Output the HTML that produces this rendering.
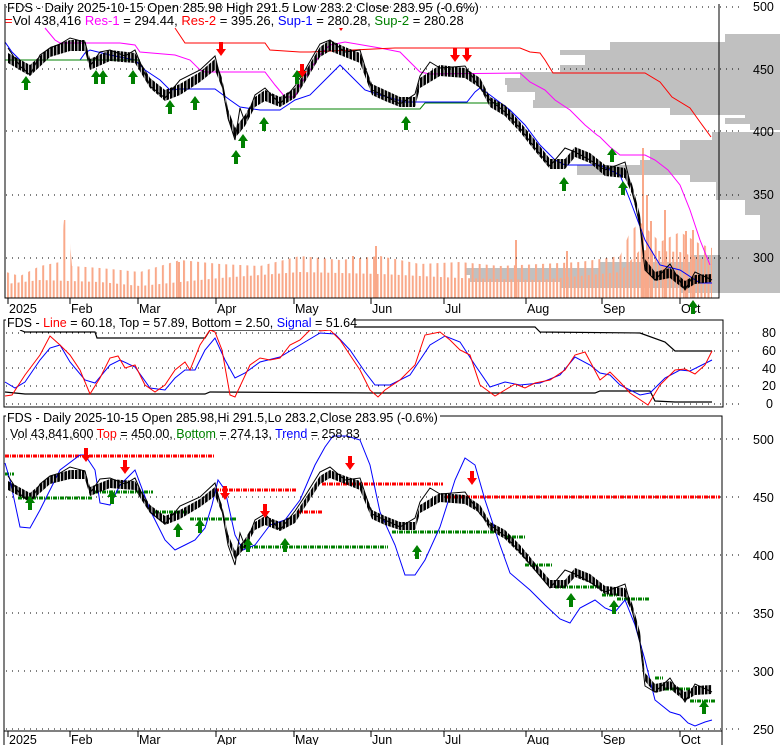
<!DOCTYPE html>
<html><head><meta charset="utf-8"><style>
html,body{margin:0;padding:0;background:#fff;}
svg{display:block;font-family:"Liberation Sans",Arial,sans-serif;}
</style></head><body>
<svg width="780" height="745" viewBox="0 0 780 745" xmlns="http://www.w3.org/2000/svg" xmlns:xlink="http://www.w3.org/1999/xlink">
<defs>
<pattern id="cp" x="8" y="0" width="3.52" height="10" patternUnits="userSpaceOnUse"><rect x="0" y="0" width="2.6" height="10" fill="#000"/></pattern>
<pattern id="vp" x="7" y="0" width="7.04" height="10" patternUnits="userSpaceOnUse"><rect x="0" y="0" width="2" height="10" fill="#f9a98a"/></pattern>
<pattern id="vp2" x="10.5" y="0" width="7.04" height="10" patternUnits="userSpaceOnUse"><rect x="0" y="0" width="2" height="10" fill="#f9a98a"/></pattern>
<path id="up" d="M0,0 L5,7 L2,7 L2,14 L-2,14 L-2,7 L-5,7Z" fill="#008000"/>
<path id="dn" d="M0,0 L5,-7 L2,-7 L2,-14 L-2,-14 L-2,-7 L-5,-7Z" fill="#ff0000"/>
</defs>
<rect width="780" height="745" fill="#fff"/>
<!-- volume profile -->
<g fill="#c0c0c0">
<rect x="725" y="34" width="55" height="8"/><rect x="610" y="42" width="170" height="8"/><rect x="560" y="50" width="220" height="5"/><rect x="585" y="55" width="195" height="10"/><rect x="560" y="65" width="220" height="7"/><rect x="520" y="72" width="260" height="6"/><rect x="505" y="78" width="275" height="7"/><rect x="507" y="85" width="273" height="7"/><rect x="535" y="92" width="245" height="8"/><rect x="533" y="100" width="247" height="8"/><rect x="670" y="108" width="110" height="7"/><rect x="745" y="115" width="35" height="3"/><rect x="725" y="118" width="55" height="6"/><rect x="750" y="124" width="30" height="6"/><rect x="712" y="132" width="68" height="8"/><rect x="680" y="140" width="100" height="10"/><rect x="650" y="150" width="130" height="10"/><rect x="640" y="160" width="140" height="5"/><rect x="577" y="165" width="203" height="10"/><rect x="690" y="175" width="90" height="7"/><rect x="716" y="182" width="64" height="18"/><rect x="745" y="200" width="35" height="15"/><rect x="760" y="215" width="20" height="25"/><rect x="720" y="240" width="60" height="15"/><rect x="690" y="255" width="90" height="7"/><rect x="600" y="262" width="180" height="6"/><rect x="465" y="268" width="315" height="7"/><rect x="470" y="275" width="310" height="7"/><rect x="560" y="282" width="220" height="6"/><rect x="680" y="288" width="100" height="5"/>
</g>
<!-- volume -->
<polygon fill="url(#vp)" points="6,298 6,272 20,276 40,266 60,262 64,220 68,220 72,266 100,268 140,272 180,260 220,264 260,266 300,256 340,260 380,256 420,264 460,262 500,266 540,264 580,262 620,256 630,232 640,222 660,242 680,232 700,244 712,248 712,298"/>
<polygon fill="url(#vp2)" points="6,298 6,284 40,280 100,282 140,286 220,278 300,272 380,274 460,278 540,280 620,272 640,250 680,252 712,262 712,298"/>
<g fill="#f9a98a"><rect x="642" y="148" width="2" height="150"/><rect x="646" y="195" width="2" height="103"/><rect x="650" y="221" width="2" height="77"/><rect x="664" y="210" width="2" height="88"/><rect x="685" y="231" width="2" height="67"/><rect x="692" y="230" width="2" height="68"/><rect x="515" y="240" width="2" height="58"/><rect x="566" y="251" width="2" height="47"/><rect x="178" y="262" width="2" height="36"/><rect x="375" y="246" width="2" height="52"/><rect x="352" y="256" width="2" height="42"/></g>
<!-- grids -->
<g stroke="#000" stroke-dasharray="1,5">
<line x1="6" y1="7" x2="740" y2="7"/><line x1="6" y1="69" x2="740" y2="69"/><line x1="6" y1="131" x2="740" y2="131"/><line x1="6" y1="195" x2="740" y2="195"/><line x1="6" y1="258" x2="740" y2="258"/>
<line x1="6" y1="333" x2="740" y2="333"/><line x1="6" y1="351" x2="740" y2="351"/><line x1="6" y1="368" x2="740" y2="368"/><line x1="6" y1="386" x2="740" y2="386"/><line x1="6" y1="404" x2="740" y2="404"/>
<line x1="6" y1="439" x2="740" y2="439"/><line x1="6" y1="497" x2="740" y2="497"/><line x1="6" y1="555" x2="740" y2="555"/><line x1="6" y1="613" x2="740" y2="613"/><line x1="6" y1="671" x2="740" y2="671"/><line x1="6" y1="729" x2="740" y2="729"/>
</g>
<!-- panel1 lines -->
<polyline fill="none" stroke="#ff00ff" points="45,28 55,40 60,43 120,43 135,45 140,52 175,55 190,60 200,70 205,72 265,72 275,85 285,97 295,97 300,85 310,70 320,55 330,45 345,42 380,48 400,52 420,72 430,74 520,73 530,82 545,90 555,100 570,110 585,125 597,135 600,137 610,147 620,155 645,155 655,160 668,170 680,185 690,210 700,240 710,265"/>
<polyline fill="none" stroke="#ff0000" points="175,28 185,43 265,43 270,50 300,52 310,52 395,48 520,48 530,52 540,53 545,60 553,73 645,73 660,82 672,97 690,108 700,122 711,137"/>
<polyline fill="none" stroke="#0000ff" points="5,42 12,52 20,60 80,60 85,53 90,50 110,55 135,60 145,70 160,80 170,90 180,89 215,89 230,100 240,107 260,110 280,110 295,100 310,95 330,75 340,65 350,75 365,90 380,95 405,102 467,102 475,92 480,88 490,95 510,110 525,125 540,145 555,160 565,165 600,165 620,175 630,200 645,240 660,265 680,270 700,283 712,283"/>
<polyline fill="none" stroke="#008000" points="5,60 140,60"/>
<polyline fill="none" stroke="#008000" points="290,109 420,109 425,103 495,103 500,105"/>
<!-- candles panel 1 -->
<polygon fill="url(#cp)" points="8,53 30,65 50,47 70,40 85,40 90,59 110,50 135,53 150,78 165,90 180,84 200,72 215,59 222,78 228,109 235,128 245,115 255,97 265,90 280,97 295,88 305,72 320,47 330,40 345,47 360,53 372,84 385,90 400,97 415,97 420,78 440,65 465,68 480,78 490,97 505,105 520,122 535,140 550,159 565,159 575,147 590,153 605,165 625,168 632,184 640,215 645,259 655,272 670,268 685,281 695,275 712,274 712,282 695,284 685,290 670,278 655,281 645,269 640,226 632,194 625,178 605,176 590,163 575,157 565,169 550,169 535,151 520,132 505,116 490,107 480,88 465,78 440,76 420,88 415,107 400,107 385,101 372,95 360,63 345,57 330,51 320,57 305,82 295,98 280,107 265,101 255,107 245,126 235,138 228,120 222,88 215,70 200,82 180,95 165,101 150,88 135,63 110,61 90,70 85,51 70,51 50,57 30,76 8,63"/>
<polyline fill="none" stroke="#000" points="8,48 20,66 30,75 40,55 50,48 60,44 70,38 85,42 90,66 100,52 110,50 125,56 135,50 150,86 165,98 180,80 200,70 215,56 222,84 228,118 235,140 240,108 245,122 255,95 265,88 280,104 295,86 305,70 320,44 330,40 345,52 360,50 372,90 385,96 400,104 415,94 420,76 430,62 440,68 465,66 480,88 490,100 505,112 520,128 535,148 550,166 565,148 575,152 590,160 605,170 625,162 632,190 640,226 645,270 655,280 670,264 685,290 695,272 712,280"/>
<!-- arrows panel1 -->
<use xlink:href="#dn" x="221" y="56"/><use xlink:href="#dn" x="302" y="78"/><use xlink:href="#dn" x="455" y="62"/><use xlink:href="#dn" x="467" y="62"/>
<polygon points="339,28 343,28 341,31" fill="#ff0000"/>
<use xlink:href="#up" x="26" y="76"/><use xlink:href="#up" x="96" y="70"/><use xlink:href="#up" x="103" y="70"/><use xlink:href="#up" x="133" y="70"/><use xlink:href="#up" x="170" y="100"/><use xlink:href="#up" x="195" y="96"/><use xlink:href="#up" x="236" y="150"/><use xlink:href="#up" x="243" y="134"/><use xlink:href="#up" x="264" y="117"/><use xlink:href="#up" x="297" y="70"/><use xlink:href="#up" x="406" y="116"/><use xlink:href="#up" x="564" y="177"/><use xlink:href="#up" x="612" y="148"/><use xlink:href="#up" x="623" y="181"/>
<!-- frame 1 -->
<polyline fill="none" stroke="#000" points="5,4 5,298 719,298 719,4"/>
<!-- date axes -->
<g stroke="#000">
<line x1="8" y1="298" x2="8" y2="304"/><line x1="70" y1="298" x2="70" y2="304"/><line x1="138" y1="298" x2="138" y2="304"/><line x1="216" y1="298" x2="216" y2="304"/><line x1="294" y1="298" x2="294" y2="304"/><line x1="371" y1="298" x2="371" y2="304"/><line x1="444" y1="298" x2="444" y2="304"/><line x1="526" y1="298" x2="526" y2="304"/><line x1="602" y1="298" x2="602" y2="304"/><line x1="680" y1="298" x2="680" y2="304"/>
<line x1="8" y1="731" x2="8" y2="737"/><line x1="70" y1="731" x2="70" y2="737"/><line x1="138" y1="731" x2="138" y2="737"/><line x1="216" y1="731" x2="216" y2="737"/><line x1="294" y1="731" x2="294" y2="737"/><line x1="371" y1="731" x2="371" y2="737"/><line x1="444" y1="731" x2="444" y2="737"/><line x1="526" y1="731" x2="526" y2="737"/><line x1="602" y1="731" x2="602" y2="737"/><line x1="680" y1="731" x2="680" y2="737"/>
</g>
<g font-size="12.5" fill="#000">
<text x="9" y="313">2025</text><text x="71" y="313">Feb</text><text x="139" y="313">Mar</text><text x="217" y="313">Apr</text><text x="295" y="313">May</text><text x="372" y="313">Jun</text><text x="445" y="313">Jul</text><text x="527" y="313">Aug</text><text x="603" y="313">Sep</text><text x="681" y="313">Oct</text>
<text x="9" y="744">2025</text><text x="71" y="744">Feb</text><text x="139" y="744">Mar</text><text x="217" y="744">Apr</text><text x="295" y="744">May</text><text x="372" y="744">Jun</text><text x="445" y="744">Jul</text><text x="527" y="744">Aug</text><text x="603" y="744">Sep</text><text x="681" y="744">Oct</text>
</g>
<use xlink:href="#up" x="693" y="300"/>
<!-- panel 2 -->
<rect x="4" y="320" width="719" height="87" fill="none" stroke="#000"/>
<polyline fill="none" stroke="#000" stroke-width="1.2" points="20,330 25,332 95,332 97,338 205,338 210,330 315,330 355,327 535,327 540,332 640,333 665,342 675,351 712,351"/>
<polyline fill="none" stroke="#000" stroke-width="1.2" points="5,392 25,394 205,394 210,392 375,393 595,393 600,391 650,391 655,401 675,402 712,402"/>
<polyline fill="none" stroke="#0000ff" points="5,382 15,388 25,382 40,360 50,348 60,345 70,362 85,380 95,383 110,365 120,360 135,367 150,388 165,390 175,378 185,370 195,370 205,350 215,338 225,360 235,378 245,373 260,362 280,357 300,345 320,333 335,334 350,350 365,372 375,385 390,385 410,375 420,360 430,345 445,336 460,342 475,365 490,387 505,382 520,385 540,383 560,375 575,357 590,365 600,373 610,375 620,385 640,395 650,393 665,378 680,370 690,371 712,360"/>
<polyline fill="none" stroke="#ff0000" points="5,396 12,395 25,375 40,355 50,336 60,345 70,355 80,370 90,394 100,378 110,358 118,356 125,368 135,365 145,385 155,392 165,385 175,370 185,362 190,370 200,345 210,330 215,332 222,350 230,395 235,397 250,365 260,358 270,360 280,358 290,345 300,340 310,330 316,327 320,331 330,330 340,340 350,355 360,370 370,390 378,397 385,390 400,380 415,365 425,335 440,332 450,340 460,350 470,355 480,385 495,396 505,390 515,384 525,388 535,383 550,380 565,370 575,355 585,352 592,365 600,380 610,372 620,382 630,393 648,405 660,385 675,370 685,369 695,374 705,365 712,351"/>
<!-- panel 3 -->
<polyline fill="none" stroke="#000" points="4,745 4,416 722,416 722,745"/>
<line x1="4" y1="731" x2="722" y2="731" stroke="#000"/>
<g stroke-width="3" stroke-dasharray="4,1,1,1">
<g stroke="#ff0000"><line x1="5" y1="456" x2="215" y2="456"/><line x1="215" y1="490" x2="297" y2="490"/><line x1="297" y1="512" x2="322" y2="512"/><line x1="322" y1="484" x2="443" y2="484"/><line x1="445" y1="497" x2="720" y2="497"/></g>
<g stroke="#008000"><line x1="5" y1="474" x2="14" y2="474"/><line x1="18" y1="498" x2="93" y2="498"/><line x1="95" y1="492" x2="153" y2="492"/><line x1="155" y1="512" x2="187" y2="512"/><line x1="190" y1="519" x2="237" y2="519"/><line x1="240" y1="547" x2="388" y2="547"/><line x1="392" y1="532" x2="497" y2="532"/><line x1="505" y1="537" x2="525" y2="537"/><line x1="525" y1="565" x2="552" y2="565"/><line x1="555" y1="587" x2="600" y2="587"/><line x1="602" y1="595" x2="617" y2="595"/><line x1="617" y1="599" x2="650" y2="599"/><line x1="655" y1="678" x2="663" y2="678"/><line x1="665" y1="689" x2="690" y2="689"/><line x1="690" y1="701" x2="715" y2="701"/></g>
</g>
<polyline fill="none" stroke="#0000ff" points="5,463 10,480 20,527 30,528 40,510 60,470 80,455 85,455 95,470 100,503 110,505 120,485 135,470 150,510 165,540 175,550 185,545 195,540 205,528 212,505 218,480 225,490 235,535 243,550 255,545 270,525 285,520 300,500 315,465 325,447 333,436 347,436 360,440 370,465 380,512 395,545 405,575 415,575 425,560 440,527 455,480 465,458 475,465 485,500 500,545 510,573 530,590 545,605 560,619 570,623 580,608 595,600 605,608 615,612 625,600 635,625 645,660 655,700 670,712 680,715 688,723 695,726 705,722 712,720"/>
<polygon fill="url(#cp)" points="8,481 30,493 50,476 70,470 85,470 90,487 110,479 135,481 150,505 165,516 180,510 200,499 215,487 222,505 228,534 235,551 245,539 255,522 265,516 280,522 295,514 305,499 320,476 330,470 345,476 360,481 372,510 385,516 400,522 415,522 420,505 440,493 465,495 480,505 490,522 505,530 520,545 535,563 550,580 565,580 575,568 590,574 605,586 625,588 632,603 640,632 645,673 655,684 670,681 685,692 695,686 712,685 712,694 695,695 685,701 670,689 655,693 645,681 640,641 632,612 625,597 605,594 590,583 575,577 565,588 550,588 535,571 520,554 505,539 490,530 480,513 465,504 440,502 420,513 415,530 400,530 385,525 372,519 360,490 345,484 330,478 320,484 305,507 295,523 280,531 265,525 255,530 245,548 235,559 228,542 222,513 215,496 200,507 180,519 165,525 150,513 135,490 110,488 90,496 85,479 70,479 50,484 30,502 8,490"/>
<polyline fill="none" stroke="#000" points="8,476 20,494 30,502 40,484 50,476 60,473 70,467 85,471 90,493 100,479 110,478 125,484 135,478 150,512 165,524 180,506 200,497 215,483 222,510 228,545 235,565 240,533 245,546 255,520 265,514 280,530 295,511 305,496 320,472 330,467 345,480 360,478 372,514 385,520 400,527 415,518 420,502 430,488 440,494 465,492 480,514 490,525 505,536 520,552 535,570 550,588 565,570 575,574 590,582 605,592 625,584 632,610 640,643 645,686 655,692 670,678 685,702 695,684 712,692"/>
<use xlink:href="#dn" x="86" y="462"/><use xlink:href="#dn" x="125" y="474"/><use xlink:href="#dn" x="225" y="500"/><use xlink:href="#dn" x="265" y="518"/><use xlink:href="#dn" x="350" y="470"/><use xlink:href="#dn" x="472" y="485"/>
<use xlink:href="#up" x="30" y="496"/><use xlink:href="#up" x="112" y="490"/><use xlink:href="#up" x="178" y="523"/><use xlink:href="#up" x="200" y="519"/><use xlink:href="#up" x="248" y="538"/><use xlink:href="#up" x="285" y="538"/><use xlink:href="#up" x="417" y="545"/><use xlink:href="#up" x="571" y="593"/><use xlink:href="#up" x="614" y="600"/><use xlink:href="#up" x="704" y="700"/>
<!-- texts -->
<g font-size="13">
<text x="7" y="12" fill="#000">FDS - Daily 2025-10-15 Open 285.98  High 291.5  Low 283.2  Close 283.95 (-0.6%)</text>
<text x="5" y="25" fill="#000"><tspan fill="#ff0000">=</tspan>Vol 438,416 <tspan fill="#ff00ff">Res-1</tspan> = 294.44, <tspan fill="#ff0000">Res-2</tspan> = 395.26, <tspan fill="#0000ff">Sup-1</tspan> = 280.28, <tspan fill="#008000">Sup-2</tspan> = 280.28</text>
</g>
<g font-size="12.5">
<rect x="6" y="316" width="348" height="14" fill="#fff"/>
<text x="7" y="327" fill="#000">FDS - <tspan fill="#ff0000">Line</tspan> = 60.18, Top = 57.89, Bottom = 2.50, <tspan fill="#0000ff">Signal</tspan> = 51.64</text>
<rect x="6" y="411" width="434" height="14" fill="#fff"/>
<text x="7" y="422" fill="#000">FDS - Daily 2025-10-15 Open 285.98,Hi 291.5,Lo 283.2,Close 283.95 (-0.6%)</text>
<text x="10" y="438" fill="#000">Vol 43,841,600 <tspan fill="#ff0000">Top</tspan> = 450.00, <tspan fill="#008000">Bottom</tspan> = 274.13, <tspan fill="#0000ff">Trend</tspan> = 258.83</text>
<g fill="#000">
<text x="753" y="11">500</text><text x="753" y="74">450</text><text x="753" y="136">400</text><text x="753" y="199">350</text><text x="753" y="262">300</text>
<text x="762" y="337">80</text><text x="762" y="355">60</text><text x="762" y="373">40</text><text x="762" y="390">20</text><text x="766" y="408">0</text>
<text x="753" y="444">500</text><text x="753" y="502">450</text><text x="753" y="560">400</text><text x="753" y="618">350</text><text x="753" y="676">300</text><text x="753" y="734">250</text>
</g></g>
</svg>
</body></html>
